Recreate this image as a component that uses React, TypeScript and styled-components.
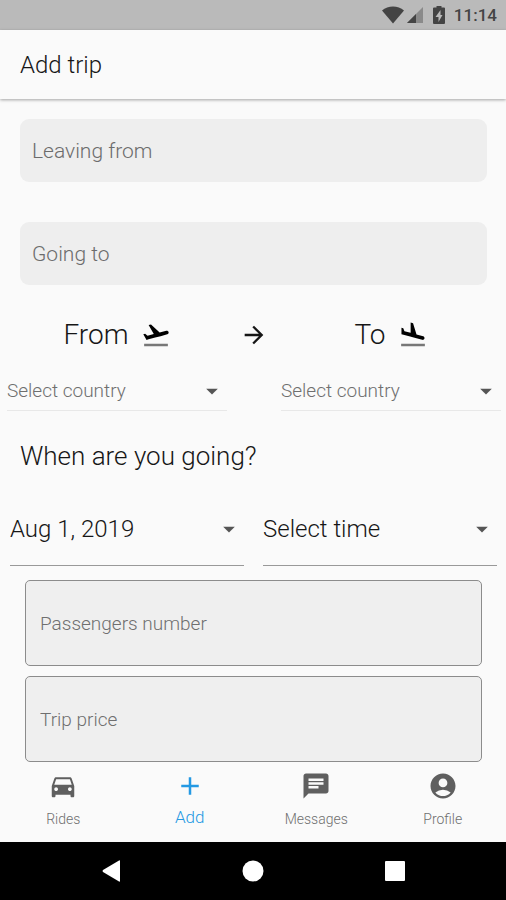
import React from "react";
import styled, { createGlobalStyle } from "styled-components";
import {
  MdAccountCircle,
  MdAdd,
  MdArrowDropDown,
  MdArrowForward,
  MdChat,
  MdDirectionsCar,
} from "react-icons/md";

const GlobalStyle = createGlobalStyle`
  *, *::before, *::after { box-sizing: border-box; }
  body {
    margin: 0;
    background: #fafafa;
    color: #161616;
    font-family: Roboto, "Noto Sans", sans-serif;
    font-weight: 300;
  }
  button, input, select { font: inherit; color: inherit; margin: 0; }
`;

const Screen = styled.div`
  display: flex;
  flex-direction: column;
  min-height: 100vh;
`;

const StatusBar = styled.div`
  display: flex;
  align-items: center;
  justify-content: flex-end;
  height: 30px;
  padding: 0 9px;
  background: #bababa;
  color: #444;
  svg { display: block; }
`;

const StatusIcons = styled.div`
  display: flex;
  align-items: center;
  gap: 2px;
  svg:last-child { margin-left: 8px; }
`;

const Clock = styled.time`
  margin-left: 9px;
  font-size: 17px;
  line-height: 32px;
  font-weight: 500;
`;

const AppBar = styled.header`
  display: flex;
  align-items: center;
  height: 69px;
  padding: 0 20px;
  box-shadow: 0 1px 3px rgba(0, 0, 0, 0.35);
`;

const Title = styled.h1`
  margin: 0;
  font-size: 24px;
  line-height: 32px;
  font-weight: 300;
`;

const Form = styled.form`
  flex: 1;
  display: flex;
  flex-direction: column;
  padding-top: 20px;
`;

const Places = styled.div`
  display: flex;
  flex-direction: column;
  gap: 40px;
  padding: 0 19px 0 20px;
`;

const PlaceInput = styled.input`
  width: 100%;
  height: 63px;
  padding: 0 12px;
  border: 0;
  border-radius: 9px;
  background: #eee;
  font-size: 21px;
  &::placeholder { color: #6c6c6c; opacity: 1; }
`;

const Countries = styled.div`
  display: grid;
  grid-template-columns: 1fr 54px 1fr;
  justify-items: center;
  align-items: center;
  padding: 27px 5px 0 7px;
  row-gap: 13px;
`;

const Direction = styled.label`
  display: flex;
  align-items: center;
  gap: 12px;
  font-size: 28px;
  line-height: 46px;
  svg { display: block; }
`;

const SelectBox = styled.div<{ $size: "small" | "large" }>`
  display: grid;
  grid-template-columns: 1fr 30px;
  align-items: center;
  justify-items: center;
  width: 100%;
  height: ${(p) => (p.$size === "large" ? 74 : 40)}px;
  font-size: ${(p) => (p.$size === "large" ? 24 : 19)}px;
  color: ${(p) => (p.$size === "large" ? "#161616" : "#6f6f6f")};
  border-bottom: 1px solid ${(p) => (p.$size === "large" ? "#999" : "#e8e8e8")};
  svg {
    grid-area: 1 / 2;
    color: #555;
    pointer-events: none;
  }
`;

const Select = styled.select`
  grid-area: 1 / 1 / 2 / 3;
  width: 100%;
  height: 100%;
  padding: 0;
  border: 0;
  background: transparent;
  appearance: none;
`;

const Question = styled.h2`
  margin: 27px 20px 18px;
  font-size: 26px;
  line-height: 36px;
  font-weight: 300;
`;

const Schedule = styled.div`
  display: grid;
  grid-template-columns: 1fr 1fr;
  gap: 19px;
  padding: 0 9px 0 10px;
`;

const Details = styled.div`
  display: flex;
  flex-direction: column;
  gap: 10px;
  padding: 14px 24px 0 25px;
`;

const DetailInput = styled.input`
  width: 100%;
  height: 86px;
  padding: 0 14px;
  border: 1px solid #8c8c8c;
  border-radius: 5px;
  background: #efefef;
  font-size: 19px;
  &::placeholder { color: #6f6f6f; opacity: 1; }
`;

const Tabs = styled.nav`
  display: grid;
  grid-template-columns: repeat(4, 1fr);
  height: 80px;
`;

const Tab = styled.a<{ $active?: boolean }>`
  display: flex;
  flex-direction: column;
  align-items: center;
  padding-top: 9px;
  gap: ${(p) => (p.$active ? 3 : 5)}px;
  font-size: ${(p) => (p.$active ? 17 : 14)}px;
  line-height: 26px;
  color: ${(p) => (p.$active ? "#2499e3" : "#6f6f6f")};
  text-decoration: none;
  svg { color: ${(p) => (p.$active ? "#2499e3" : "#5f5f5f")}; }
`;

const SystemBar = styled.div`
  display: flex;
  align-items: center;
  justify-content: space-around;
  height: 58px;
  padding: 0 40px;
  background: #000;
`;

const SystemButton = styled.button`
  display: flex;
  padding: 0;
  border: 0;
  background: none;
`;

function TakeoffIcon() {
  return (
    <svg width="30" height="30" viewBox="0 0 24 24" aria-hidden="true">
      <path fill="#777" d="M2.5 19h19v2h-19z" />
      <path
        fill="#000"
        d="M22.07 9.64c-.21-.8-1.04-1.28-1.84-1.06L14.92 10l-6.9-6.43-1.93.51 4.14 7.17-4.97 1.33-1.97-1.54-1.45.39 1.82 3.16.77 1.33 1.6-.43 5.31-1.42 4.35-1.16L21 11.49c.81-.23 1.28-1.05 1.07-1.85z"
      />
    </svg>
  );
}

function LandingIcon() {
  return (
    <svg width="30" height="30" viewBox="0 0 24 24" aria-hidden="true">
      <path fill="#777" d="M2.5 19h19v2h-19z" />
      <path
        fill="#000"
        d="M9.68 13.27l4.35 1.16 5.31 1.42c.8.21 1.62-.26 1.84-1.06.21-.8-.26-1.62-1.06-1.84l-5.31-1.42-2.76-9.02L10.12 2v8.28L5.15 8.95l-.93-2.32-1.45-.39v5.17l1.6.43 5.31 1.43z"
      />
    </svg>
  );
}

function StatusGlyphs() {
  return (
    <StatusIcons aria-hidden="true">
      <svg width="22" height="18" viewBox="0 0 22 18" fill="currentColor">
        <path d="M0 4.5C6 -.8 16 -.8 22 4.5L11 17.5z" />
      </svg>
      <svg width="17" height="18" viewBox="0 0 17 18" fill="currentColor">
        <path opacity=".4" d="M17 1v16H1z" />
        <path d="M10 8v9H1z" />
      </svg>
      <svg width="12" height="20" viewBox="8 0 12 20" fill="currentColor">
        <path
          fillRule="evenodd"
          d="M11.5 2.5V1h5v1.500h2.500q1 0 1 1V18q0 1-1 1h-10q-1 0-1-1V3.500q0-1 1-1zM15.500 5L10.500 12h3V17l4-7h-2z"
        />
      </svg>
    </StatusIcons>
  );
}

type PickerProps = {
  id: string;
  label?: string;
  value: string;
  size: "small" | "large";
};

function Picker({ id, label, value, size }: PickerProps) {
  return (
    <SelectBox $size={size}>
      <Select id={id} aria-label={label} defaultValue={value}>
        <option>{value}</option>
      </Select>
      <MdArrowDropDown size={28} />
    </SelectBox>
  );
}

export default function App() {
  return (
    <Screen>
      <GlobalStyle />
      <StatusBar>
        <StatusGlyphs />
        <Clock>11:14</Clock>
      </StatusBar>
      <AppBar>
        <Title>Add trip</Title>
      </AppBar>
      <Form>
        <Places>
          <PlaceInput aria-label="Leaving from" placeholder="Leaving from" />
          <PlaceInput aria-label="Going to" placeholder="Going to" />
        </Places>
        <Countries>
          <Direction htmlFor="from-country">
            From <TakeoffIcon />
          </Direction>
          <MdArrowForward size={28} />
          <Direction htmlFor="to-country">
            To <LandingIcon />
          </Direction>
          <Picker id="from-country" value="Select country" size="small" />
          <span />
          <Picker id="to-country" value="Select country" size="small" />
        </Countries>
        <Question>When are you going?</Question>
        <Schedule>
          <Picker id="date" label="Date" value="Aug 1, 2019" size="large" />
          <Picker id="time" label="Time" value="Select time" size="large" />
        </Schedule>
        <Details>
          <DetailInput aria-label="Passengers number" placeholder="Passengers number" />
          <DetailInput aria-label="Trip price" placeholder="Trip price" />
        </Details>
      </Form>
      <Tabs>
        <Tab href="#rides"><MdDirectionsCar size={30} />Rides</Tab>
        <Tab href="#add" $active aria-current="page"><MdAdd size={30} />Add</Tab>
        <Tab href="#messages"><MdChat size={30} />Messages</Tab>
        <Tab href="#profile"><MdAccountCircle size={30} />Profile</Tab>
      </Tabs>
      <SystemBar>
        <SystemButton aria-label="Back">
          <svg width="20" height="22" viewBox="0 0 20 22" fill="#fff"><path d="M19 1v20q0 1-1 .5L2 12q-1-1 0-2L18 .5q1-.5 1 .5z" /></svg>
        </SystemButton>
        <SystemButton aria-label="Home">
          <svg width="22" height="22" viewBox="0 0 22 22" fill="#fff"><circle cx="11" cy="11" r="10.500" /></svg>
        </SystemButton>
        <SystemButton aria-label="Recent apps">
          <svg width="20" height="20" viewBox="0 0 20 20" fill="#fff"><rect width="20" height="20" rx="1" /></svg>
        </SystemButton>
      </SystemBar>
    </Screen>
  );
}
